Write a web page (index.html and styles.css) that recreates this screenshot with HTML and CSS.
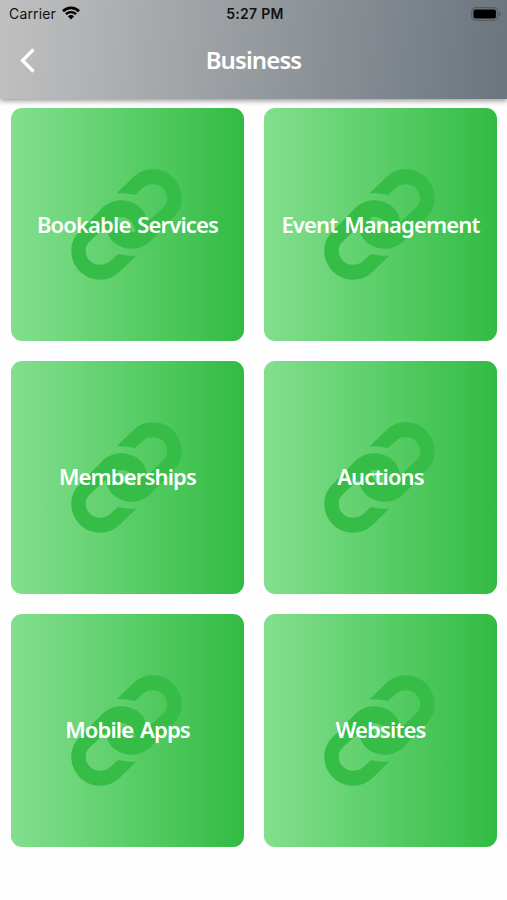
FILE: index.html
```html
<!DOCTYPE html>
<html lang="en">
<head>
  <meta charset="UTF-8" />
  <meta name="viewport" content="width=device-width, initial-scale=1.0"/>
  <title>Business</title>
  <link rel="stylesheet" href="styles.css">
</head>
<body>
  <svg class="symbols" width="0" height="0">
    <symbol id="link" viewBox="0 0 111 111">
      <path id="half" d="M45.700 24.300L62 8.500C68 2.800 74 0.300 82.300 0.300C98 0.300 110.700 13.500 110.700 29.300C110.700 37 107.500 44 102 49L79 72.700C74 77 68 79.700 60.700 79.700C49 79.700 39 73 36 63L34 56L46 46C47 55 51 62 59 63C63 63.500 66 62.500 69 60L91.500 39.300C95 36.500 96.300 33 96.300 29.300C96.300 21.500 90 15.300 82.300 15.300C78.500 15.300 75 16 72.300 18.500L64 26C58 24.500 52 24 45.700 24.300Z"/>
      <use href="#half" transform="rotate(180 55.500 55.500)"/>
    </symbol>
  </svg>

  <header class="header">
    <div class="status">
      <div class="carrier">
        <span>Carrier</span>
        <svg class="wifi" viewBox="0 0 18 14">
          <path d="M1 5.200C5.500 0.800 12.500 0.800 17 5.200" stroke-width="2.600"/>
          <path d="M3.900 8.200C6.800 5.400 11.200 5.400 14.100 8.200" stroke-width="2.400"/>
          <path class="dot" d="M9 13.400L5.900 10.200C7.600 8.600 10.400 8.600 12.100 10.200Z"/>
        </svg>
      </div>
      <div class="time">5:27 PM</div>
      <svg class="battery" viewBox="0 0 30 14">
        <rect class="shell" x="0.700" y="0.700" width="26" height="12.600" rx="3.500"/>
        <rect x="2.500" y="2.500" width="22.400" height="9" rx="1.800"/>
        <path class="cap" d="M28 4.700C30 5.500 30 8.500 28 9.300Z"/>
      </svg>
    </div>
    <div class="nav">
      <svg class="back" viewBox="0 0 16 25"><path d="M13.500 1.500L2.500 12.500L13.500 23.500"/></svg>
      <h1>Business</h1>
    </div>
  </header>

  <main class="grid">
    <a class="card"><svg class="icon"><use href="#link"/></svg><span class="label">Bookable Services</span></a>
    <a class="card"><svg class="icon"><use href="#link"/></svg><span class="label">Event Management</span></a>
    <a class="card"><svg class="icon"><use href="#link"/></svg><span class="label">Memberships</span></a>
    <a class="card"><svg class="icon"><use href="#link"/></svg><span class="label">Auctions</span></a>
    <a class="card"><svg class="icon"><use href="#link"/></svg><span class="label">Mobile Apps</span></a>
    <a class="card"><svg class="icon"><use href="#link"/></svg><span class="label">Websites</span></a>
  </main>
</body>
</html>
```
FILE: styles.css
```css
* {
  box-sizing: border-box;
}
body {
  margin: 0;
  background: #fefefe;
  color: #111;
  font-family: "Noto Sans", "Open Sans", sans-serif;
}
.symbols {
  display: block;
}
.header {
  height: 99px;
  background: linear-gradient(94deg, #c0c0c0, #6b757e);
  box-shadow: 0 2px 5px rgba(0, 0, 0, 0.4);
}
.status {
  display: grid;
  grid-template-columns: 1fr auto 1fr;
  align-items: center;
  height: 27px;
  padding: 0 6px 0 9px;
  font-family: Inter, sans-serif;
  font-size: 14px;
}
.carrier {
  display: flex;
  align-items: center;
  gap: 6px;
  letter-spacing: 0.15px;
}
.wifi {
  width: 18px;
  height: 14px;
  margin-top: -2px;
  fill: none;
  stroke: #000;
}
.wifi .dot {
  fill: #000;
  stroke: none;
}
.time {
  font-weight: 600;
  letter-spacing: 0.3px;
}
.battery {
  justify-self: end;
  width: 30px;
  height: 14px;
}
.battery .shell {
  fill: none;
  stroke: #50565b;
}
.battery .cap {
  fill: #50565b;
}
.nav {
  display: grid;
  grid-template-columns: 60px 1fr 60px;
  align-items: center;
  height: 66px;
}
.back {
  width: 16px;
  height: 25px;
  margin-left: 20px;
  fill: none;
  stroke: #fff;
  stroke-width: 3.2;
}
h1 {
  margin: 0;
  padding-bottom: 2px;
  color: #fff;
  font-size: 24px;
  font-weight: 600;
  letter-spacing: -0.9px;
  text-align: center;
}
.grid {
  display: grid;
  grid-template-columns: 233.4px 233.4px;
  gap: 19.6px;
  padding: 9px 0 0 10.8px;
}
.card {
  display: grid;
  place-items: center;
  height: 233.2px;
  border-radius: 11px;
  background: linear-gradient(90deg, #83df8e, #5bce69 50%, #32bb44);
}
.icon {
  grid-area: 1 / 1;
  width: 111px;
  height: 111px;
  margin-right: 2px;
  fill: #35bd47;
}
.label {
  grid-area: 1 / 1;
  z-index: 1;
  padding-bottom: 2px;
  color: #fff;
  font-size: 22px;
  font-weight: 600;
  letter-spacing: -0.85px;
  word-spacing: 2px;
  white-space: nowrap;
}
```
